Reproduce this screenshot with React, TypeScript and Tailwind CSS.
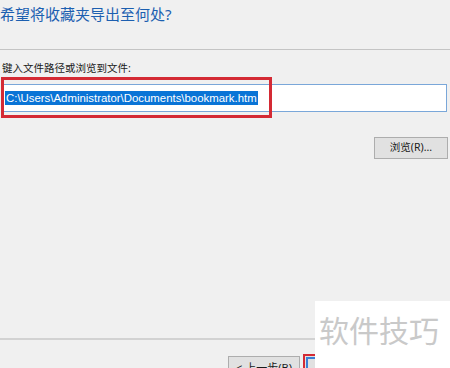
export default function App() {
  const font = { fontFamily: '"Noto Sans", "Noto Sans CJK SC", sans-serif' };
  return (
    <div
      className="relative w-[450px] h-[368px] overflow-hidden bg-[#f0f0f0] flex flex-col"
      style={font}
    >
      <div className="h-[49px] pt-[3px]">
        <h1 className="text-[15px] leading-[22px] text-[#1c5fb0] whitespace-nowrap">
          希望将收藏夹导出至何处?
        </h1>
      </div>
      <div className="h-px bg-[#c4c4c4]" />

      <div className="h-[34px] pt-[11px] pl-[2px] text-[10.5px] leading-[14px] text-[#1a1a1a] whitespace-nowrap">
        键入文件路径或浏览到文件:
      </div>

      <div className="relative h-[28px] ml-[2px] mr-[3px] border border-[#7aa7d9] bg-white flex items-center pl-[2px]">
        <span
          className="bg-[#0a74d6] text-white text-[11.4px] leading-[14px] px-[1px] whitespace-nowrap"
          style={{ fontFamily: '"Liberation Sans", Arial, sans-serif' }}
        >
          C:\Users\Administrator\Documents\bookmark.htm
        </span>
        <div className="absolute -left-[2px] -top-[8px] w-[271px] h-[41px] border-[3px] border-[#d42a34] pointer-events-none" />
      </div>

      <div className="flex justify-end pr-[2px] pt-[25px]">
        <button className="w-[74px] h-[22px] border border-[#adadad] bg-[#e1e1e1] text-[10.5px] text-[#1a1a1a] flex items-center justify-center">
          浏览(R)...
        </button>
      </div>

      <div className="flex-1" />
      <div className="h-[2px] bg-[#d2d2d2]" />
      <div className="h-[16px]" />
      <div className="h-[12px] flex items-start pl-[228px]">
        <button className="w-[72px] h-[24px] shrink-0 border border-[#adadad] bg-[#e1e1e1] text-[11px] leading-[22px] text-[#1a1a1a]">
          &lt; 上一步(B)
        </button>
        <div className="ml-[3px] -mt-[2px] w-[40px] h-[24px] shrink-0 border-2 border-[#d42a34] bg-[#e1e1e1] p-[1px]">
          <div className="w-full h-full border-2 border-[#3a7fd5]" />
        </div>
      </div>

      <div className="absolute left-[315px] top-[301px] w-[135px] h-[67px] bg-white flex items-start">
        <span className="mt-[10px] ml-[4px] text-[30px] leading-[40px] text-[#c9c9c9] whitespace-nowrap">
          软件技巧
        </span>
      </div>
    </div>
  );
}
